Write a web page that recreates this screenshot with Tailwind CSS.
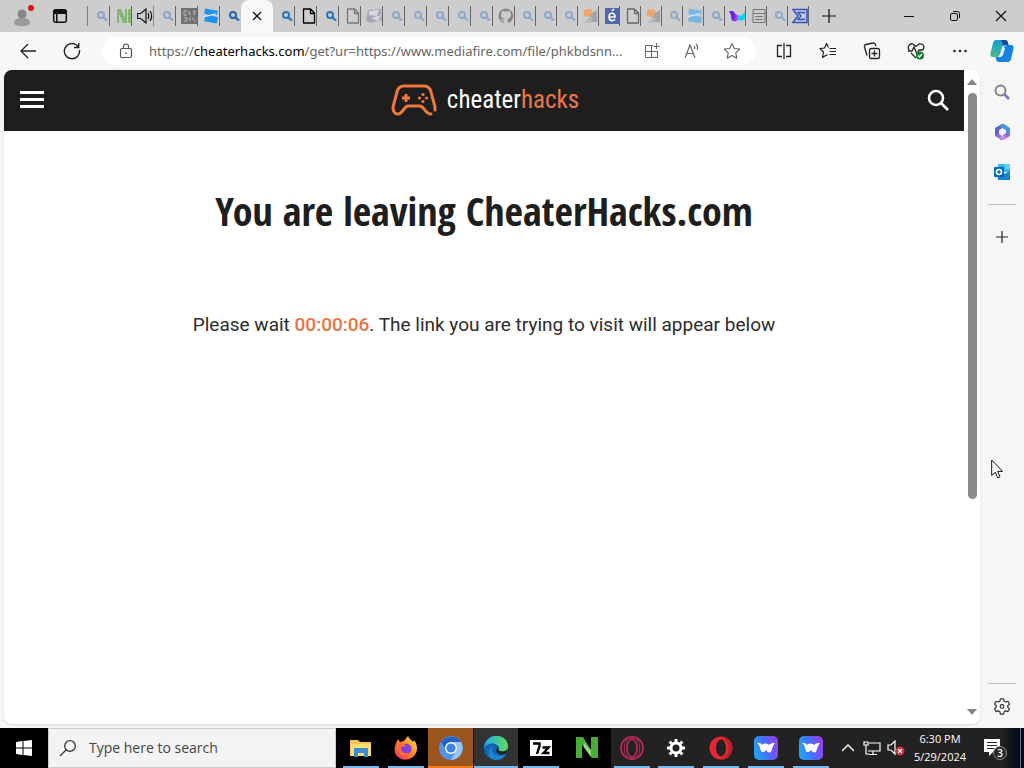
<!DOCTYPE html>
<html lang="en">
<head>
<meta charset="utf-8">
<meta name="viewport" content="width=device-width, initial-scale=1">
<title>You are leaving CheaterHacks.com</title>
<script src="https://cdn.jsdelivr.net/npm/@tailwindcss/browser@4"></script>
</head>
<body class="flex h-screen flex-col overflow-hidden bg-[#f6f6f6] font-['Open_Sans','Noto_Sans',sans-serif]">

<svg class="absolute h-0 w-0" aria-hidden="true">
  <defs>
    <symbol id="mag" viewBox="0 0 14 14"><circle cx="6" cy="6" r="3" fill="none" stroke="currentColor" stroke-width="2"/><path d="M8.300 8.300 12 11.500" stroke="currentColor" stroke-width="2.200"/></symbol>
    <symbol id="doc" viewBox="0 0 14 16"><path d="M1.500 1h7l4 4v10h-11zM8.500 1v4.500h4" fill="none" stroke="currentColor" stroke-width="1.300" stroke-linejoin="round"/></symbol>
    <symbol id="pic" viewBox="0 0 14 14"><path d="M0 1l7-1 2 4-3 4-6-1z" fill="#eda56c"/><path d="M8 4l5-3v12H2l4-5z" fill="#a3a2a5"/><path d="M0 14l7-6 2 2-3 4z" fill="#bab8ba"/></symbol>
    <symbol id="roblox" viewBox="0 0 15 14"><path d="M2 0l12 2-1 4H9v1l5 1-1 6-12-2 1-5h4V6L1 5z" fill="currentColor"/><path d="M0 8l12-3" stroke="#d8ecfa" stroke-width="1"/></symbol>
    <linearGradient id="wgrad" x1="0" y1="0.600" x2="1" y2="0.300"><stop stop-color="#20a5f5"/><stop offset=".5" stop-color="#4a6cf5"/><stop offset="1" stop-color="#9a3cf0"/></linearGradient>
    <symbol id="wave" viewBox="0 0 24 24"><rect width="24" height="24" rx="5" fill="url(#wgrad)"/><path d="M3 7c2 0 4 0 5 2 2-2 5-2 7 0 2-2 4-2 6-2-1 1-1 2-2 3l-2 6c-2 1-4 0-5-2-1 2-4 3-5 1L5 9z" fill="#fff"/></symbol>
    <symbol id="gear" viewBox="0 0 20 20"><path d="M8.200 2h3.600l.6 2.700 1.500.9 2.600-.9 1.800 3.200-2 1.800v1.600l2 1.800-1.800 3.200-2.600-.9-1.500.9-.6 2.700H8.200l-.6-2.700-1.500-.9-2.600.9-1.800-3.200 2-1.800V9.700l-2-1.800 1.800-3.200 2.600.9 1.500-.9z" fill="none" stroke="currentColor" stroke-width="1.300" stroke-linejoin="round"/><circle cx="10" cy="10.500" r="2" fill="none" stroke="currentColor" stroke-width="1.300"/></symbol>
  </defs>
</svg>

<!-- Tab strip -->
<header class="flex h-8 shrink-0 items-end bg-[#cdcdcd] text-black">
  <button aria-label="Profile" class="flex h-8 w-11 items-center justify-center">
    <svg class="h-6 w-6" viewBox="0 0 24 24"><circle cx="12" cy="10" r="4.500" fill="#858585"/><path d="M4 20c0-5 3-6 8-6s8 1 8 6c-5 3-11 3-16 0z" fill="#9a9a9a"/><circle cx="21" cy="4" r="3" fill="#e8101b"/></svg>
  </button>
  <button aria-label="Tab actions" class="flex h-8 w-8 items-center justify-center">
    <svg class="h-4 w-4" viewBox="0 0 16 16"><rect x="1.700" y="1.700" width="12.600" height="12.600" rx="2" fill="none" stroke="#111" stroke-width="1.500"/><path d="M1.500 2h13v4h-13zM4 5h1.500v9H4z" fill="#111"/></svg>
  </button>
  <nav aria-label="Tabs" class="ml-2.5 flex h-8 items-end">
    <div class="flex h-8 items-center pl-px text-[#8fa4c8]">
      <span class="h-5 w-px bg-[#777]"></span>
      <button aria-label="Tab 1" class="flex h-5 w-[22px] items-center justify-end border-r border-[#666]"><svg class="h-3.5 w-3.5"><use href="#mag"/></svg></button>
      <button aria-label="Tab 2" class="flex h-5 w-[22px] items-center justify-end border-r border-[#666]"><svg class="h-3.5 w-3.5" viewBox="0 0 14 14"><path d="M0 14V0h4l4 9V0h2v14H6L2 5v9zM11 0h3v14h-3z" fill="#83b873"/></svg></button>
      <button aria-label="Tab 3, playing audio" class="flex h-5 w-[22px] items-center justify-end border-r border-[#888]"><svg class="h-4 w-4" viewBox="0 0 16 16" fill="none" stroke="#111" stroke-width="1.200"><path d="M.7 5.500h3L9 1v14l-5.300-4.500h-3zM11 5c1 2 1 4 0 6M13 3c2 3 2 7 0 10"/></svg></button>
      <button aria-label="Tab 4" class="flex h-5 w-[22px] items-center justify-end border-r border-[#666]"><svg class="h-3.5 w-3.5"><use href="#mag"/></svg></button>
      <button aria-label="Tab 5" class="flex h-5 w-[22px] items-center justify-end border-r border-[#666]"><svg class="h-4 w-4" viewBox="0 0 16 16"><path d="M0 0h16v16H0z" fill="#737373"/><path d="M6 3H3v4h3M8 3v3h2M12 3h2v3h-2M3 10h3v3H3M9 9v4M11 10l3 3" stroke="#bbb" fill="none"/></svg></button>
      <button aria-label="Tab 6" class="flex h-5 w-[22px] items-center justify-end border-r border-[#666] text-[#1f93ea]"><svg class="h-4 w-4"><use href="#roblox"/></svg></button>
      <button aria-label="Tab 7" class="flex h-5 w-[21px] items-center justify-end text-[#2468ac]"><svg class="h-3.5 w-3.5"><use href="#mag"/></svg></button>
    </div>
    <button aria-label="Close current tab" class="flex h-8 w-8 items-center justify-center rounded-t-lg bg-[#f8f8f8]"><svg class="h-3 w-3" viewBox="0 0 12 12"><path d="M2 2l8 8M10 2l-8 8" stroke="#111" stroke-width="1.300"/></svg></button>
    <div class="flex h-8 items-center text-[#8fa9cb]">
      <button aria-label="Tab 9" class="flex h-5 w-[22px] items-center justify-end border-r border-[#666] text-[#2877bd]"><svg class="h-3.5 w-3.5"><use href="#mag"/></svg></button>
      <button aria-label="Tab 10" class="flex h-5 w-[22px] items-center justify-end border-r border-[#666] text-black"><svg class="h-4 w-3.5"><use href="#doc"/></svg></button>
      <button aria-label="Tab 11" class="flex h-5 w-[22px] items-center justify-end border-r border-[#666] text-[#2877bd]"><svg class="h-3.5 w-3.5"><use href="#mag"/></svg></button>
      <button aria-label="Tab 12" class="flex h-5 w-[22px] items-center justify-end border-r border-[#666] text-[#777]"><svg class="h-4 w-3.5"><use href="#doc"/></svg></button>
      <button aria-label="Tab 13" class="flex h-5 w-[22px] items-center justify-end border-r border-[#666]"><svg class="h-4 w-4" viewBox="0 0 16 16"><path d="M2 2l13-1 1 11-12 3-4-3z" fill="#a6a8b5"/><path d="M3 3l10-1-2 6-8-1zM5 10l10-3-3 6z" fill="#d5d6e0"/></svg></button>
      <button aria-label="Tab 14" class="flex h-5 w-[22px] items-center justify-end border-r border-[#666]"><svg class="h-3.5 w-3.5"><use href="#mag"/></svg></button>
      <button aria-label="Tab 15" class="flex h-5 w-[22px] items-center justify-end border-r border-[#666]"><svg class="h-3.5 w-3.5"><use href="#mag"/></svg></button>
      <button aria-label="Tab 16" class="flex h-5 w-[22px] items-center justify-end border-r border-[#666]"><svg class="h-3.5 w-3.5"><use href="#mag"/></svg></button>
      <button aria-label="Tab 17" class="flex h-5 w-[22px] items-center justify-end border-r border-[#666]"><svg class="h-3.5 w-3.5"><use href="#mag"/></svg></button>
      <button aria-label="Tab 18" class="flex h-5 w-[22px] items-center justify-end border-r border-[#666]"><svg class="h-3.5 w-3.5"><use href="#mag"/></svg></button>
      <button aria-label="Tab 19" class="flex h-5 w-[22px] items-center justify-end border-r border-[#666]"><svg class="h-4 w-4" viewBox="0 0 16 16"><path d="M8 .5a7.500 7.500 0 0 0-2.400 14.600v-2.300c-2 .4-2.600-.5-3.200-1.600l2.300.4 1.300.5c.1-.7.500-1 .8-1.100C4 10.500 3 9 3 7c0-1 .4-1.800.9-2.300V2.500L6 3.600a8 8 0 0 1 4 0l2.100-1.100v2.200c.6.500.9 1.300.9 2.300 0 2-1 3.500-3.800 4 .6.500.9 1.200.9 2v2.100A7.500 7.500 0 0 0 8 .5" fill="#858585"/></svg></button>
      <button aria-label="Tab 20" class="flex h-5 w-[21px] items-center justify-end border-r border-[#666]"><svg class="h-3.5 w-3.5"><use href="#mag"/></svg></button>
      <button aria-label="Tab 21" class="flex h-5 w-[21px] items-center justify-end border-r border-[#666]"><svg class="h-3.5 w-3.5"><use href="#mag"/></svg></button>
      <button aria-label="Tab 22" class="flex h-5 w-[21px] items-center justify-end border-r border-[#666]"><svg class="h-3.5 w-3.5"><use href="#mag"/></svg></button>
      <button aria-label="Tab 23" class="flex h-5 w-[21px] items-center justify-end border-r border-[#666]"><svg class="h-3.5 w-3.5"><use href="#pic"/></svg></button>
      <button aria-label="Tab 24" class="flex h-5 w-[21px] items-center justify-end border-r border-[#666]"><svg class="h-4 w-3.5" viewBox="0 0 14 16"><path d="M0 0h14v16H0z" fill="#5266ad"/><path d="M4 9h6c0-5-6-5-6 0s5 4 6 2M7 3l2-2" fill="none" stroke="#fff" stroke-width="1.600"/></svg></button>
      <button aria-label="Tab 25" class="flex h-5 w-[21px] items-center justify-end border-r border-[#666] text-[#666]"><svg class="h-4 w-3.5"><use href="#doc"/></svg></button>
      <button aria-label="Tab 26" class="flex h-5 w-[21px] items-center justify-end border-r border-[#666]"><svg class="h-3.5 w-3.5"><use href="#pic"/></svg></button>
      <button aria-label="Tab 27" class="flex h-5 w-[21px] items-center justify-end border-r border-[#666]"><svg class="h-3.5 w-3.5"><use href="#mag"/></svg></button>
      <button aria-label="Tab 28" class="flex h-5 w-[21px] items-center justify-end border-r border-[#666] text-[#79b5e2]"><svg class="h-4 w-4"><use href="#roblox"/></svg></button>
      <button aria-label="Tab 29" class="flex h-5 w-[21px] items-center justify-end border-r border-[#666]"><svg class="h-3.5 w-3.5"><use href="#mag"/></svg></button>
      <button aria-label="Tab 30" class="flex h-5 w-[21px] items-center justify-end border-r border-[#666]"><svg class="h-4 w-4" viewBox="0 0 16 16"><path d="M0 3h4l4 5-1 5c-4 1-5-2-5-6z" fill="#6424ef"/><path d="M5 12l2-6 4 4-3 3z" fill="#d52be5"/><path d="M9 7l3 1 4-4v7l-4 2-4-2z" fill="#0bd5ee"/></svg></button>
      <button aria-label="Tab 31" class="flex h-5 w-[21px] items-center justify-end border-r border-[#666]"><svg class="h-4 w-3.5" viewBox="0 0 14 16" fill="none" stroke="#777"><path d="M1 1.500h12v13H1zM1 5.500h12M3 8.500h8M3 11.500h8"/></svg></button>
      <button aria-label="Tab 32" class="flex h-5 w-[21px] items-center justify-end border-r border-[#666]"><svg class="h-3.5 w-3.5"><use href="#mag"/></svg></button>
      <button aria-label="Tab 33" class="flex h-5 w-[21px] items-center justify-end border-r border-[#666]"><svg class="h-4 w-4" viewBox="0 0 16 16" fill="none" stroke="#3155c8"><path d="M1 1.500h14v13H1l5-6.500z" stroke-width="1.600"/><path d="M12 6V4.500H6L9 8l-3 3.500h6V10" stroke-width="1.400"/></svg></button>
    </div>
  </nav>
  <button aria-label="New tab" class="flex h-8 w-10 items-center justify-center"><svg class="h-4 w-4" viewBox="0 0 16 16"><path d="M8 1v14M1 8h14" stroke="#111" stroke-width="1.200"/></svg></button>
  <div class="ml-auto flex h-8">
    <button aria-label="Minimize" class="flex w-[46px] items-center justify-center"><svg class="h-3 w-3" viewBox="0 0 12 12"><path d="M1 6.500h10" stroke="#111"/></svg></button>
    <button aria-label="Restore" class="flex w-[46px] items-center justify-center"><svg class="h-3 w-3" viewBox="0 0 12 12" fill="none" stroke="#111"><rect x="1.500" y="3.500" width="7" height="7" rx="1.500"/><path d="M4 1.500h4.500a2 2 0 0 1 2 2V8"/></svg></button>
    <button aria-label="Close" class="flex w-[46px] items-center justify-center"><svg class="h-3 w-3" viewBox="0 0 12 12"><path d="M1 1l10 10M11 1L1 11" stroke="#111" stroke-width="1.200"/></svg></button>
  </div>
</header>

<!-- Address toolbar -->
<div class="flex h-[38px] shrink-0 items-center bg-[#f7f7f7] pl-1.5 text-[#222]">
  <button aria-label="Back" class="flex h-8 w-11 items-center justify-center"><svg class="h-4 w-4" viewBox="0 0 16 16" fill="none" stroke="currentColor" stroke-width="1.300"><path d="M16 8H1M8 1L1 8l7 7"/></svg></button>
  <button aria-label="Refresh" class="flex h-8 w-11 items-center justify-center"><svg class="h-[18px] w-[18px]" viewBox="0 0 18 18" fill="none" stroke="currentColor" stroke-width="1.400"><path d="M16.500 8A7.600 7.600 0 1 1 13.500 3l2 2M15.700 1v4.500H11"/></svg></button>
  <div class="ml-2 flex h-7 min-w-0 flex-1 items-center rounded-full bg-white pl-[15px] pr-1 text-[#666]">
    <button aria-label="Site information" class="mr-3.5 flex h-6 w-[18px] items-center justify-center"><svg class="h-4 w-3.5" viewBox="0 0 14 16" fill="none" stroke="#555" stroke-width="1.200"><rect x="1.500" y="5.500" width="11" height="9" rx="1.500"/><path d="M4.500 5V3.500a2.500 2.500 0 0 1 5 0V5M7 9v2"/></svg></button>
    <a href="#" class="min-w-0 flex-1 truncate font-['Noto_Sans','Open_Sans',sans-serif] text-[13px] leading-5">https://<span class="text-black">cheaterhacks.com</span>/get?ur=https://www.mediafire.com/file/phkbdsnn...</a>
    <button aria-label="Install app" class="flex h-6 w-10 items-center justify-center"><svg class="h-4 w-4" viewBox="0 0 16 16" fill="none" stroke="currentColor"><path d="M9 2.500H1.500v12h12V8M7.500 2.500v12M1.500 8.500h12M12.500 0v6M9.500 3.500h6"/></svg></button>
    <button aria-label="Read aloud" class="flex h-6 w-10 items-center justify-center"><svg class="h-4 w-4" viewBox="0 0 16 16" fill="none" stroke="currentColor" stroke-width="1.200"><path d="M1 15L6 2l5 13M3 10.500h6.500M10 3c1 1 1 2 .5 3M12 1c2 2 2 4 1 6"/></svg></button>
    <button aria-label="Add to favorites" class="flex h-6 w-10 items-center justify-center"><svg class="h-[18px] w-[18px]" viewBox="0 0 18 18" fill="none" stroke="currentColor" stroke-width="1.100" stroke-linejoin="round"><path d="M9 1.500l2.300 5 5.400.6-4 3.700 1.100 5.400L9 13.500l-4.800 2.700 1.100-5.400-4-3.700 5.400-.6z"/></svg></button>
  </div>
  <div class="ml-1.5 flex items-center pr-0.5">
    <button aria-label="Split screen" class="flex h-8 w-11 items-center justify-center"><svg class="h-4 w-4" viewBox="0 0 16 16" fill="none" stroke="currentColor" stroke-width="1.300"><path d="M6 2.500H1.500v11H6M10 2.500h4.500v11H10M8 0v16"/></svg></button>
    <button aria-label="Favorites" class="flex h-8 w-11 items-center justify-center"><svg class="h-[18px] w-[18px]" viewBox="0 0 18 18" fill="none" stroke="currentColor" stroke-width="1.200" stroke-linejoin="round"><path d="M9.500 5.500L7.500 1.500l-2 4.500-4.500.7L4.500 10l-1 5.500 4-2.500 1 .5M10.500 6.500H17M10.500 9.500H17M10.500 12.500H17"/></svg></button>
    <button aria-label="Collections" class="flex h-8 w-11 items-center justify-center"><svg class="h-[18px] w-[18px]" viewBox="0 0 18 18" fill="none" stroke="currentColor" stroke-width="1.300"><rect x="6.500" y="6.500" width="10" height="10" rx="2"/><path d="M11.500 8.500v6M8.500 11.500h6M4 13.500L1.500 5Q1 3 3 2.500L10 1q2-.5 3 3"/></svg></button>
    <button aria-label="Browser essentials" class="flex h-8 w-11 items-center justify-center"><svg class="h-[18px] w-[18px]" viewBox="0 0 18 18" fill="none" stroke="currentColor" stroke-width="1.300"><path d="M2 8C0 4 3 1 6 2l3 2.500L12 2c4-1 6 2 4 6M4 11l5 5M1 9h4l2-4 3 7 2-4h4"/><circle cx="13" cy="13.500" r="4" fill="#117d2b" stroke="none"/><path d="M11 13.500l1.500 1.500 2.500-3" stroke="#fff"/></svg></button>
    <button aria-label="Settings and more" class="flex h-8 w-11 items-center justify-center"><svg class="h-4 w-4" viewBox="0 0 16 16" fill="currentColor"><circle cx="2.500" cy="8" r="1.300"/><circle cx="8" cy="8" r="1.300"/><circle cx="13.500" cy="8" r="1.300"/></svg></button>
    <button aria-label="Copilot" class="flex h-8 w-10 items-center justify-center"><svg class="h-6 w-6" viewBox="0 0 24 24"><defs><linearGradient id="cg" x1="0" y1="0" x2="0" y2="1"><stop stop-color="#159ed0"/><stop offset="1" stop-color="#44b98c"/></linearGradient></defs><path d="M6 1h9c2 0 2.500 1 3 3l.5 2h-3c-2 0-3 1-3.500 3l-2 6c-.5 2-1.500 3-3 3H3c-3 0-3-3-2-6l2-8c.6-2 1.500-3 3-3z" fill="url(#cg)"/><path d="M18 23H9c-2 0-2.500-1-3-3l-.5-2h3c2 0 3-1 3.500-3l2-6c.5-2 1.500-3 3-3h4c3 0 3 3 2 6l-2 8c-.6 2-1.500 3-3 3z" fill="#1683e4"/><path d="M11 1h4c2 0 2.500 1 3 3l.5 2h-3l-2 1z" fill="#1747ac"/><path d="M12 9h3l-2 7q-1 2-3 2H8q2-1 2.500-3z" fill="#e8f8ff"/></svg></button>
  </div>
</div>

<!-- Page and sidebar -->
<div class="flex min-h-0 flex-1 pb-1 pl-1">
  <div class="flex min-w-0 flex-1 overflow-hidden rounded-lg bg-white shadow-sm">
    <div class="flex min-w-0 flex-1 flex-col">
      <div class="flex h-[61px] shrink-0 items-center justify-between bg-[#1e1e1e] pb-0.5 pl-4 pr-3.5 text-white">
        <button aria-label="Menu" class="flex w-6">
          <svg class="h-[18px] w-6" viewBox="0 0 24 18" fill="#fff"><path d="M0 0h24v3H0zM0 7h24v3H0zM0 14h24v3H0z"/></svg>
        </button>
        <a href="#" class="flex items-center gap-2.5 font-['Roboto_Condensed','Open_Sans_Condensed',sans-serif] text-[25px] leading-8">
          <svg class="h-8 w-[46px]" viewBox="0 0 46 32" fill="none" stroke="#f07838" stroke-width="3" stroke-linecap="round" stroke-linejoin="round"><path d="M40 30c-6 0-7-8-11-8H17c-4 0-5 8-10 8-4 0-5-3-5-7L6 8c1-4 3-6 7-6h20c4 0 6 2 7 6l4 15v3"/><path d="M15 10v8M11 14h8" stroke-linecap="butt"/><g fill="#f07838" stroke="none"><circle cx="32" cy="10.500" r="1.600"/><circle cx="32" cy="17.500" r="1.600"/><circle cx="28.500" cy="14" r="1.600"/><circle cx="35.500" cy="14" r="1.600"/></g></svg>
          <span>cheater<span class="text-[#e97a46]">hacks</span></span>
        </a>
        <button aria-label="Search" class="flex h-6 w-6 items-center justify-center"><svg class="h-[22px] w-[22px]" viewBox="0 0 22 22" fill="none" stroke="#fff" stroke-width="2.600"><circle cx="9" cy="9" r="7"/><path d="M14 14l7 7"/></svg></button>
      </div>
      <main class="flex flex-col items-center px-8 pt-[54px] text-center text-[#1e1e1e]">
        <h1 class="font-['Open_Sans_Condensed','Liberation_Sans_Narrow',sans-serif] text-[40px] font-bold leading-[52px]">You are leaving CheaterHacks.com</h1>
        <p class="mt-[74px] font-['Roboto',sans-serif] text-[19px] leading-7 text-[#2c2c2c]">Please wait <span class="font-medium text-[#ea7443]">00:00:06</span>. The link you are trying to visit will appear below</p>
      </main>
    </div>
    <div class="flex w-4 flex-col items-center py-2" aria-hidden="true">
      <svg class="h-2 w-2.5 shrink-0" viewBox="0 0 10 8"><path d="M5 1l5 6H0z" fill="#858585"/></svg>
      <div class="mt-[7px] flex w-[9px] flex-1 flex-col"><div class="rounded-full bg-[#8a8a8a]" style="height:66%"></div></div>
      <svg class="h-2 w-2.5 shrink-0" viewBox="0 0 10 8"><path d="M0 1h10L5 7z" fill="#858585"/></svg>
    </div>
  </div>
  <aside class="relative flex w-11 flex-col items-center pt-2.5 text-[#333]">
    <button aria-label="Search sidebar" class="flex h-6 w-8 items-center justify-center"><svg class="h-[18px] w-[18px]" viewBox="0 0 18 18" fill="none"><circle cx="7.500" cy="7.500" r="5" stroke="#858585" stroke-width="2"/><path d="M11 11l5 5" stroke="#7b72c5" stroke-width="2.500"/></svg></button>
    <button aria-label="Microsoft 365" class="mt-4 flex h-6 w-8 items-center justify-center"><svg class="h-[18px] w-[18px]" viewBox="0 0 18 18"><path d="M9 1L2 5v8l4 2V7l5-3z" fill="#5864ce"/><path d="M8 1h3l6 4v6l-4 2V7L7 4z" fill="#4a94e5"/><path d="M2 12l4-1 3 2 4-3h4v3l-7 4H8z" fill="#8f67df"/><path d="M6 14l3-1 4-1-1 4-3 1z" fill="#d48ae6"/><circle cx="9.500" cy="9" r="2.800" fill="#f6f6f6"/></svg></button>
    <button aria-label="Outlook" class="mt-4 flex h-6 w-8 items-center justify-center"><svg class="h-[18px] w-[18px]" viewBox="0 0 18 18"><path d="M5 1h12v8H5z" fill="#35b7ed"/><path d="M5 8l6 3 6-3v9H5z" fill="#1583d4"/><path d="M12 1h5v5h-5z" fill="#62d2f4"/><rect x="1" y="4" width="10" height="10" rx="1" fill="#0867b7"/><circle cx="6" cy="9" r="2.500" fill="none" stroke="#fff" stroke-width="1.600"/></svg></button>
    <hr class="mt-5 w-7 border-[#bbb]">
    <button aria-label="Customize sidebar" class="mt-5 flex h-6 w-8 items-center justify-center"><svg class="h-3.5 w-3.5" viewBox="0 0 14 14"><path d="M7 1v12M1 7h12" stroke="#222" stroke-width="1.200"/></svg></button>
    <hr class="mt-auto w-7 border-[#bbb]">
    <button aria-label="Sidebar settings" class="mb-2 mt-3 flex h-5 w-8 items-center justify-center"><svg class="h-[18px] w-[18px]"><use href="#gear"/></svg></button>
    <svg class="absolute left-[11px] top-[389px] h-5 w-3" viewBox="0 0 12 20"><path d="M.7 1v15.500l3.600-3.300 2.400 5.600 2.300-1-2.400-5.400h5z" fill="#fff" stroke="#111"/></svg>
  </aside>
</div>

<!-- Taskbar -->
<footer class="flex h-10 shrink-0 bg-[#222] text-white">
  <div class="flex flex-none bg-black">
    <button aria-label="Start" class="flex w-12 items-center justify-center"><svg class="h-4 w-4" viewBox="0 0 16 16" fill="#fff"><path d="M0 2l6.500-1v6.500H0zM7.500.9L16 0v7.500H7.500zM0 8.500h6.500V15L0 14zM7.500 8.500H16V16l-8.500-1z"/></svg></button>
    <label class="flex w-72 items-center border border-[#ccc] bg-[#f3f3f3] pl-2.5 text-[#333]">
      <svg class="mr-3 h-[18px] w-[18px]" viewBox="0 0 18 18" fill="none" stroke="#333" stroke-width="1.300"><circle cx="11" cy="7" r="5.300"/><path d="M7 11l-6 6"/></svg>
      <input type="text" aria-label="Type here to search" placeholder="Type here to search" class="min-w-0 flex-1 bg-transparent text-sm placeholder-[#444] outline-none">
    </label>
    <div class="ml-0.5 flex">
      <button aria-label="File Explorer" class="flex w-[45px] flex-col items-center justify-between"><svg class="mt-2 h-6 w-6" viewBox="0 0 24 24"><path d="M1 4h8l2 2h11v14H1z" fill="#f6c64c"/><path d="M2 8h20v12H2z" fill="#fadb78"/><path d="M5 12h14v9h-4v-4H9v4H5z" fill="#368fd0"/></svg><span class="h-0.5 w-9 bg-[#76b9ed]"></span></button>
      <button aria-label="Firefox" class="flex w-[45px] flex-col items-center justify-between"><svg class="mt-2 h-6 w-6" viewBox="0 0 24 24"><defs><linearGradient id="fx" x1="1" y1="0" x2="0" y2="1"><stop stop-color="#fff04a"/><stop offset=".45" stop-color="#ff8a1f"/><stop offset="1" stop-color="#f0206a"/></linearGradient></defs><path d="M4 3l2 3 4-1 4-5c1 3 4 4 5 6l1-2c3 4 4 9 2 13-4 8-15 9-20 2C-1 14 1 8 4 3z" fill="url(#fx)"/><circle cx="12" cy="13" r="5.500" fill="#8640dc"/><path d="M4 7c3-1 6 0 8 3-2 0-3 1-5 1-1 5 4 8 9 5-4 6-12 4-13-3z" fill="#ff7139"/></svg><span class="h-0.5 w-9 bg-[#76b9ed]"></span></button>
      <button aria-label="Chromium" class="flex w-[45px] flex-col items-center justify-between bg-[#98561c]"><svg class="mt-2 h-6 w-6" viewBox="0 0 24 24"><circle cx="12" cy="12" r="12" fill="#5293ed"/><path d="M2 6a12 12 0 0 1 20 0H12L7 13z" fill="#2462c2"/><path d="M22 6a12 12 0 0 1-10 18l5-9-2-9z" fill="#9ac3fa"/><circle cx="12" cy="12" r="6" fill="#fff"/><circle cx="12" cy="12" r="4.600" fill="#3c82e8"/></svg><span class="h-0.5 w-full bg-[#fd7a14]"></span></button>
      <button aria-label="Microsoft Edge" class="flex w-[45px] flex-col items-center justify-between border-l border-black bg-[#333]"><svg class="mt-2 h-6 w-6" viewBox="0 0 24 24"><defs><linearGradient id="eg" x1="0" x2="1"><stop stop-color="#20a7e8"/><stop offset="1" stop-color="#62db60"/></linearGradient></defs><circle cx="12" cy="12" r="12" fill="#1166b5"/><path d="M0 12C1-4 23-4 24 10c0 5-5 7-9 5-2-1 0-2-1-5-2-4-12-3-14 2z" fill="url(#eg)"/><path d="M8 13c0 7 8 9 14 5-3 6-10 7-14 5-5-3-5-11 3-14-2 1-3 2-3 4z" fill="#1b85cf"/><path d="M14 10c2 3-1 4 2 5 3 1 6 0 8-2l-2 5c-6 2-13-1-8-8z" fill="#222"/></svg><span class="h-0.5 w-full bg-[#76b9ed]"></span></button>
      <button aria-label="7-Zip" class="flex w-[45px] flex-col items-center justify-between"><svg class="mt-3 h-4 w-[22px]" viewBox="0 0 22 16" fill="none"><path d="M0 0h22v16H0z" fill="#fff"/><path d="M3 3.500h6.500V6L7 14M12.500 7.500h6l-5 5.500h6" stroke="#000" stroke-width="2.400"/></svg><span class="h-0.5 w-9 bg-[#76b9ed]"></span></button>
      <button aria-label="Notepad N" class="flex w-12 flex-col items-center"><svg class="mt-2 h-[22px] w-[22px]" viewBox="0 0 22 22"><path d="M0 22V1h7l8 13V1h7v21h-6L6 9v13z" fill="#48ae37"/><path d="M8 7l7 7v7L8 11z" fill="#93d77c"/></svg></button>
    </div>
  </div>
  <div class="flex flex-none">
    <button aria-label="Opera GX" class="flex w-[42px] flex-col items-center justify-between"><svg class="mt-2 h-6 w-6" viewBox="0 0 24 24" fill="none" stroke="#b52a55" stroke-width="1.800"><circle cx="12" cy="12" r="11"/><ellipse cx="12" cy="12" rx="5" ry="9"/><path d="M8 2C3 8 3 16 8 22M16 2c5 6 5 14 0 20" stroke-width="1"/></svg><span class="h-0.5 w-9 bg-[#76b9ed]"></span></button>
    <button aria-label="Settings" class="flex w-[45px] flex-col items-center justify-between"><svg class="mt-2.5 h-5 w-5" viewBox="0 0 20 20" fill="none" stroke="#fff"><circle cx="10" cy="10" r="5" stroke-width="3"/><path d="M10 1v3M10 16v3M1 10h3M16 10h3M3.600 3.600l2.200 2.200M14.200 14.200l2.200 2.200M16.400 3.600l-2.200 2.200M5.800 14.200l-2.200 2.200" stroke-width="3"/></svg><span class="h-0.5 w-9 bg-[#76b9ed]"></span></button>
    <button aria-label="Opera" class="flex w-[45px] flex-col items-center justify-between"><svg class="mt-2 h-6 w-6" viewBox="0 0 24 24"><circle cx="12" cy="12" r="11.500" fill="#e82632"/><path d="M13 1c14 3 14 19 0 22 9-6 9-16 0-22z" fill="#b5202b"/><ellipse cx="12" cy="12" rx="5" ry="8.500" fill="#222"/></svg><span class="h-0.5 w-9 bg-[#76b9ed]"></span></button>
    <button aria-label="Wave" class="flex w-[45px] flex-col items-center justify-between"><svg class="mt-2 h-6 w-6"><use href="#wave"/></svg><span class="h-0.5 w-9 bg-[#76b9ed]"></span></button>
    <button aria-label="Wave, second window" class="flex w-[45px] flex-col items-center justify-between"><svg class="mt-2 h-6 w-6"><use href="#wave"/></svg><span class="h-0.5 w-9 bg-[#76b9ed]"></span></button>
  </div>
  <div class="ml-auto flex items-center">
    <button aria-label="Show hidden icons" class="flex h-10 w-6 items-center justify-center"><svg class="h-3 w-3" viewBox="0 0 12 12"><path d="M0 9l6-6 6 6" fill="none" stroke="#fff" stroke-width="1.300"/></svg></button>
    <button aria-label="Network" class="flex h-10 w-6 items-center justify-center"><svg class="h-4 w-[18px]" viewBox="0 0 18 16" fill="none" stroke="#fff" stroke-width="1.200"><path d="M6 3h11v8H5M10 11v4M6 14.500h8M1 2h4v3H1zM3 5v9h3"/></svg></button>
    <button aria-label="Volume muted" class="flex h-10 w-6 items-center justify-center"><svg class="h-4 w-[18px]" viewBox="0 0 18 16"><path d="M1 5h3l4-4v13l-4-4H1z" fill="none" stroke="#fff" stroke-width="1.200"/><circle cx="13" cy="11" r="4.500" fill="#ce2f36"/><path d="M11 9l4 4M15 9l-4 4" stroke="#fff" stroke-width="1.300"/></svg></button>
    <button aria-label="Clock" class="flex w-16 flex-col items-center text-[11px] leading-[18px]"><span>6:30 PM</span><span>5/29/2024</span></button>
    <button aria-label="3 notifications" class="flex h-10 w-12 items-center justify-center bg-linear-to-r from-[#222] from-60% to-[#020a1c]"><svg class="h-6 w-6" viewBox="0 0 24 24"><path d="M0 3h16v13H9l-4 4v-4H0z" fill="#fff"/><path d="M3 6.500h10M3 9.500h10M3 12.500h7" stroke="#222" stroke-width="1.200"/><circle cx="16" cy="17" r="6.500" fill="#292929" stroke="#888"/><text x="16" y="21" text-anchor="middle" font-family="Open Sans, sans-serif" font-size="10" font-weight="600" fill="#fff">3</text></svg></button>
    <button aria-label="Show desktop" class="h-10 w-1 border-l border-[#697080] bg-[#020a1c]"></button>
  </div>
</footer>
</body>
</html>
